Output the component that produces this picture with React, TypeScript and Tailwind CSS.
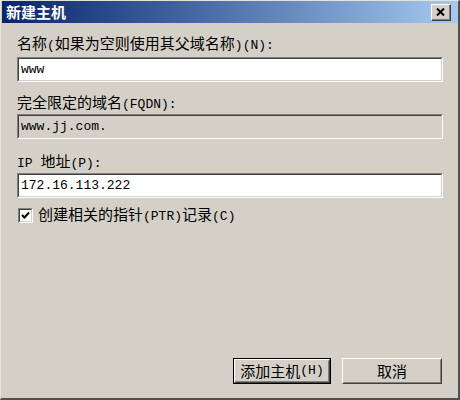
import type { ReactNode } from 'react'

// ASCII runs use a Courier-like face, CJK runs use the CJK font (like SimSun's mixed metrics)
function Mixed({ text }: { text: string }) {
  const parts = text.split(/([\x20-\x7e]+)/)
  return (
    <>
      {parts.map((p, i) =>
        /^[\x20-\x7e]+$/.test(p) ? (
          <span key={i} className="font-['Liberation_Mono',monospace] text-[13px]">
            {p}
          </span>
        ) : (
          p
        )
      )}
    </>
  )
}

function Sunken({ children, readOnly }: { children?: ReactNode; readOnly?: boolean }) {
  return (
    <div className="border border-t-[#808080] border-l-[#808080] border-b-white border-r-white">
      <div
        className={`flex h-[23px] items-center border border-t-[#404040] border-l-[#404040] border-b-[#d4d0c8] border-r-[#d4d0c8] px-[2px] font-['Liberation_Mono',monospace] text-[13px] text-black ${
          readOnly ? 'bg-[#d4d0c8]' : 'bg-white'
        }`}
      >
        {children}
      </div>
    </div>
  )
}

function Button({ label, isDefault, width }: { label: string; isDefault?: boolean; width: string }) {
  return (
    <div className={`${width} h-[26px] ${isDefault ? 'border border-black' : ''}`}>
      <div className="h-full border border-t-white border-l-white border-b-[#404040] border-r-[#404040]">
        <div className="flex h-full items-center justify-center border border-t-[#d4d0c8] border-l-[#d4d0c8] border-b-[#808080] border-r-[#808080] text-[15px] text-black">
          <Mixed text={label} />
        </div>
      </div>
    </div>
  )
}

export default function App() {
  return (
    <div className="w-[460px] h-[400px] bg-[#d4d0c8] font-['Noto_Sans_CJK_SC',sans-serif] leading-[18px] text-black">
      <div className="flex h-full flex-col border-t border-l border-t-[#e4e2dc] border-l-[#e4e2dc] border-r-2 border-b-2 border-r-[#505050] border-b-[#505050] pl-[1px]">
        {/* title bar */}
        <div className="flex h-[22px] items-center justify-between bg-gradient-to-r from-[#0a246a] to-[#a6caf0] pl-[4px] pr-[7px]">
          <span className="text-[15px] font-bold text-white">新建主机</span>
          <div className="h-[17px] w-[20px] border border-t-white border-l-white border-b-[#404040] border-r-[#404040] bg-[#d4d0c8]">
            <div className="flex h-full items-center justify-center border-b border-r border-b-[#808080] border-r-[#808080]">
              <svg width="9" height="8" viewBox="0 0 9 8">
                <path d="M1 0.5 L8 7.5 M8 0.5 L1 7.5" stroke="black" strokeWidth="2" />
              </svg>
            </div>
          </div>
        </div>

        {/* body */}
        <div className="flex flex-1 flex-col pl-[15px] pr-[15px]">
          <div className="mt-[12px] flex h-[18px] items-center text-[15px]">
            <span>
              <Mixed text="名称(如果为空则使用其父域名称)(N):" />
            </span>
          </div>
          <div className="mt-[4px]">
            <Sunken>www</Sunken>
          </div>

          <div className="mt-[12px] flex h-[18px] items-center text-[15px]">
            <span>
              <Mixed text="完全限定的域名(FQDN):" />
            </span>
          </div>
          <div className="mt-[2px]">
            <Sunken readOnly>www.jj.com.</Sunken>
          </div>

          <div className="mt-[14px] flex h-[18px] items-center text-[15px]">
            <span>
              <Mixed text="IP 地址(P):" />
            </span>
          </div>
          <div className="mt-[2px]">
            <Sunken>172.16.113.222</Sunken>
          </div>

          <div className="mt-[8px] flex h-[18px] items-center gap-[5px] pl-[1px]">
            <div className="h-[15px] w-[15px] border border-t-[#808080] border-l-[#808080] border-b-white border-r-white">
              <div className="flex h-full items-center justify-center border border-t-[#404040] border-l-[#404040] border-b-[#d4d0c8] border-r-[#d4d0c8] bg-white">
                <svg width="9" height="9" viewBox="0 0 9 9">
                  <path d="M1 4 L3.5 6.5 L8 1.5" fill="none" stroke="black" strokeWidth="2" />
                </svg>
              </div>
            </div>
            <span className="text-[15px]">
              <Mixed text="创建相关的指针(PTR)记录(C)" />
            </span>
          </div>

          <div className="flex-1" />

          <div className="mb-[14px] flex justify-end gap-[11px] pr-[1px]">
            <Button label="添加主机(H)" isDefault width="w-[98px]" />
            <Button label="取消" width="w-[100px]" />
          </div>
        </div>
      </div>
    </div>
  )
}
